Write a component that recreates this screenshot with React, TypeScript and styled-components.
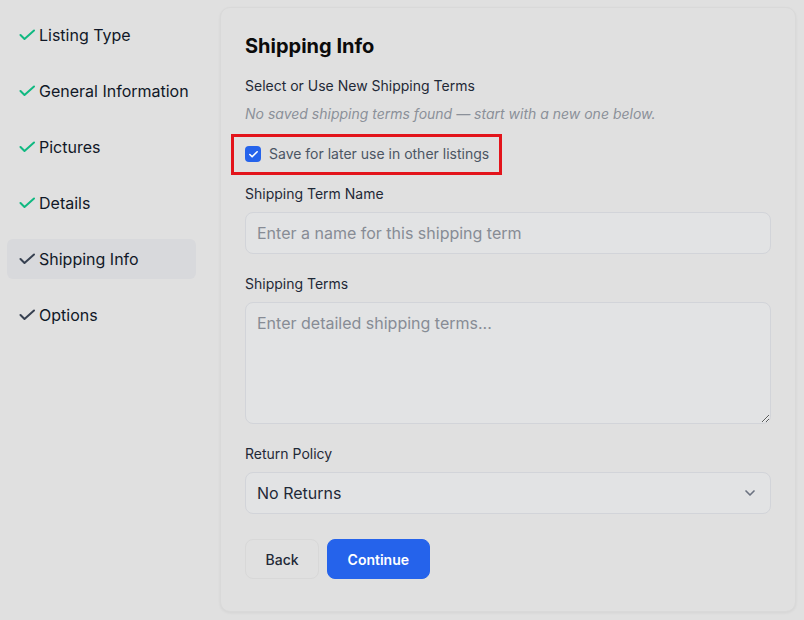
import React from "react";
import styled, { createGlobalStyle } from "styled-components";

const GlobalStyle = createGlobalStyle`
  * { box-sizing: border-box; }
  body {
    margin: 0;
    background: #e0e0e0;
    font-family: Inter, "Noto Sans", sans-serif;
    color: #1f2937;
  }
`;

const Page = styled.div`
  display: flex;
  align-items: flex-start;
  gap: 24px;
  padding: 7px 8px 8px 7px;
  min-height: 620px;
`;

const Sidebar = styled.nav`
  width: 189px;
  flex-shrink: 0;
  display: flex;
  flex-direction: column;
  gap: 16px;
  padding-top: 8px;
`;

const StepItem = styled.div<{ active?: boolean }>`
  height: 40px;
  display: flex;
  align-items: center;
  gap: 4px;
  padding-left: 12px;
  border-radius: 6px;
  background: ${(p) => (p.active ? "#d8d9dc" : "transparent")};
  font-size: 16px;
  color: #111827;
`;

const Card = styled.section`
  flex: 1;
  background: #e0e0e0;
  border: 1px solid #d9d9d9;
  border-radius: 10px;
  box-shadow: 0 1px 3px rgba(0, 0, 0, 0.06);
  padding: 24px 24px 32px;
  display: flex;
  flex-direction: column;
`;

const Title = styled.h2`
  margin: 0 0 16px;
  font-size: 20px;
  line-height: 28px;
  font-weight: 700;
  color: #0b0b0b;
`;

const Label = styled.label`
  display: block;
  font-size: 14px;
  line-height: 20px;
  font-weight: 400;
  color: #1f2937;
`;

const Hint = styled.p`
  margin: 8px 0 20px;
  font-size: 14px;
  line-height: 20px;
  font-style: italic;
  color: #8b9099;
`;

const CheckRow = styled.label`
  position: relative;
  align-self: flex-start;
  display: flex;
  align-items: center;
  gap: 8px;
  font-size: 14px;
  line-height: 20px;
  color: #4b5563;
  margin-bottom: 20px;
`;

const Highlight = styled.span`
  position: absolute;
  top: -10px;
  bottom: -11px;
  left: -14px;
  right: -13px;
  border: 3px solid #e3141b;
  pointer-events: none;
`;

const Box = styled.span`
  width: 16px;
  height: 16px;
  border-radius: 4px;
  background: #2563eb;
  display: flex;
  align-items: center;
  justify-content: center;
`;

const Field = styled.div`
  display: flex;
  flex-direction: column;
  gap: 8px;
  margin-bottom: 20px;
`;

const inputBase = `
  width: 100%;
  font-family: Inter, "Noto Sans", sans-serif;
  font-size: 16px;
  color: #1f2937;
  background: #e2e3e4;
  border: 1px solid #d2d4d9;
  border-radius: 8px;
  padding: 0 11px;
  outline: none;
  &::placeholder { color: #878c95; }
`;

const TextInput = styled.input`
  ${inputBase}
  height: 42px;
`;

const TextArea = styled.textarea`
  ${inputBase}
  height: 122px;
  padding-top: 10px;
  line-height: 20px;
  display: block;
  resize: vertical;
`;

const SelectBox = styled.div`
  ${inputBase}
  height: 42px;
  display: flex;
  align-items: center;
  justify-content: space-between;
  padding-right: 12px;
`;

const Actions = styled.div`
  display: flex;
  gap: 8px;
  margin-top: 5px;
`;

const Button = styled.button<{ primary?: boolean }>`
  height: 40px;
  padding: 0 19.5px;
  border-radius: 8px;
  font-family: Inter, "Noto Sans", sans-serif;
  font-size: 14px;
  font-weight: ${(p) => (p.primary ? 600 : 500)};
  color: ${(p) => (p.primary ? "#ffffff" : "#1f2937")};
  background: ${(p) => (p.primary ? "#2563eb" : "#e0e0e0")};
  border: 1px solid ${(p) => (p.primary ? "#2563eb" : "#d8d8d8")};
`;

const StepCheck = ({ color }: { color: string }) => (
  <svg width="16" height="16" viewBox="0 0 16 16" fill="none" stroke={color} strokeWidth="2" strokeLinecap="round" strokeLinejoin="round">
    <path d="M1.5 8 5.5 12 15 3.5" />
  </svg>
);

const steps = [
  { name: "Listing Type", done: true },
  { name: "General Information", done: true },
  { name: "Pictures", done: true },
  { name: "Details", done: true },
  { name: "Shipping Info", done: false, active: true },
  { name: "Options", done: false },
];

export default function App() {
  return (
    <>
      <GlobalStyle />
      <Page>
        <Sidebar>
          {steps.map((s) => (
            <StepItem key={s.name} active={s.active}>
              <StepCheck color={s.done ? "#10b981" : "#374151"} />
              {s.name}
            </StepItem>
          ))}
        </Sidebar>
        <Card>
          <Title>Shipping Info</Title>
          <Label>Select or Use New Shipping Terms</Label>
          <Hint>No saved shipping terms found — start with a new one below.</Hint>
          <CheckRow>
            <Box>
              <svg width="11" height="11" viewBox="0 0 24 24" fill="none" stroke="#fff" strokeWidth="3.5" strokeLinecap="round" strokeLinejoin="round">
                <path d="M20 6 9 17l-5-5" />
              </svg>
            </Box>
            Save for later use in other listings
            <Highlight />
          </CheckRow>
          <Field>
            <Label>Shipping Term Name</Label>
            <TextInput placeholder="Enter a name for this shipping term" />
          </Field>
          <Field>
            <Label>Shipping Terms</Label>
            <TextArea placeholder="Enter detailed shipping terms..." />
          </Field>
          <Field>
            <Label>Return Policy</Label>
            <SelectBox>
              No Returns
              <svg width="16" height="16" viewBox="0 0 24 24" fill="none" stroke="#6b7280" strokeWidth="2.5" strokeLinecap="round" strokeLinejoin="round">
                <path d="m6 9 6 6 6-6" />
              </svg>
            </SelectBox>
          </Field>
          <Actions>
            <Button>Back</Button>
            <Button primary>Continue</Button>
          </Actions>
        </Card>
      </Page>
    </>
  );
}
